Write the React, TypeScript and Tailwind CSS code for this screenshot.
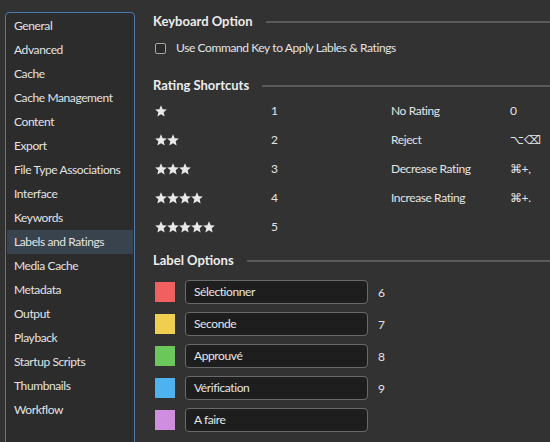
import React from "react";

const navItems = [
  "General",
  "Advanced",
  "Cache",
  "Cache Management",
  "Content",
  "Export",
  "File Type Associations",
  "Interface",
  "Keywords",
  "Labels and Ratings",
  "Media Cache",
  "Metadata",
  "Output",
  "Playback",
  "Startup Scripts",
  "Thumbnails",
  "Workflow",
];

const ratings = [
  { stars: 1, key: "1", label: "No Rating", shortcut: "0" },
  { stars: 2, key: "2", label: "Reject", shortcut: "⌥⌫" },
  { stars: 3, key: "3", label: "Decrease Rating", shortcut: "⌘+," },
  { stars: 4, key: "4", label: "Increase Rating", shortcut: "⌘+." },
  { stars: 5, key: "5", label: "", shortcut: "" },
];

const labels = [
  { color: "bg-[#f06060]", name: "Sélectionner", key: "6" },
  { color: "bg-[#f0cf50]", name: "Seconde", key: "7" },
  { color: "bg-[#6cc75a]", name: "Approuvé", key: "8" },
  { color: "bg-[#4fb2f0]", name: "Vérification", key: "9" },
  { color: "bg-[#d08ee0]", name: "A faire", key: "" },
];

function Star() {
  return (
    <svg viewBox="1 1 22 22" className="w-[12px] h-[12px] fill-[#e8e8e8]">
      <path d="M12 1.5l3.1 7.2 7.6.6-5.8 5 1.8 7.6L12 17.8 5.3 21.9l1.8-7.6-5.8-5 7.6-.6z" />
    </svg>
  );
}

function SectionTitle({ title }: { title: string }) {
  return (
    <div className="flex items-center gap-[13px] h-[20px]">
      <h2 className="text-[13px] font-bold text-[#ececec] whitespace-nowrap tracking-normal">{title}</h2>
      <div className="flex-1 h-[2px] bg-[#5a5a5a]" />
    </div>
  );
}

export default function App() {
  return (
    <div
      className="w-[550px] h-[442px] overflow-hidden bg-[#323232] flex text-[12px] text-[#e3e3e3] tracking-[-0.4px]"
      style={{ fontFamily: 'Lato, "Liberation Sans", sans-serif' }}
    >
      {/* Sidebar */}
      <div className="w-[135px] shrink-0 pl-[5px] pt-[12px]">
        <div className="h-[460px] border border-[#4a7ab4] rounded-t-[4px] bg-[#2c2c2c] pt-px px-[1px]">
          {navItems.map((item) => (
            <div
              key={item}
              className={`h-[24px] flex items-center pl-[7px] whitespace-nowrap ${
                item === "Labels and Ratings" ? "bg-[#38434e]" : ""
              }`}
            >
              {item}
            </div>
          ))}
        </div>
      </div>

      {/* Main */}
      <div className="flex-1 pl-[18px] pt-[12px]">
        <SectionTitle title="Keyboard Option" />
        <label className="flex items-center gap-[10px] mt-[6px] ml-[2px] h-[20px]">
          <span className="w-[11px] h-[11px] border-[1.5px] border-[#a8a8a8] rounded-[2px] bg-[#2a2a2a]" />
          <span>Use Command Key to Apply Lables &amp; Ratings</span>
        </label>

        <div className="mt-[18px]">
          <SectionTitle title="Rating Shortcuts" />
        </div>
        <div>
          {ratings.map((r) => (
            <div key={r.key} className="flex items-center h-[29px]">
              <div className="w-[118px] flex pl-[2px]">
                {Array.from({ length: r.stars }).map((_, i) => (
                  <Star key={i} />
                ))}
              </div>
              <div className="w-[120px]">{r.key}</div>
              <div className="w-[119px]">{r.label}</div>
              <div>{r.shortcut}</div>
            </div>
          ))}
        </div>

        <div className="mt-[10px]">
          <SectionTitle title="Label Options" />
        </div>
        <div className="mt-[9px] flex flex-col gap-[8px]">
          {labels.map((l) => (
            <div key={l.name} className="flex items-center h-[24px]">
              <div className={`w-[20px] h-[20px] ml-[2px] ${l.color}`} />
              <div className="ml-[10px] w-[183px] h-[24px] rounded-[4px] border border-[#6a6a6a] bg-[#1e1e1e] flex items-center pl-[8px] text-[#e6e6e6]">
                {l.name}
              </div>
              <div className="ml-[10px] pt-[2px]">{l.key}</div>
            </div>
          ))}
        </div>
      </div>
    </div>
  );
}
